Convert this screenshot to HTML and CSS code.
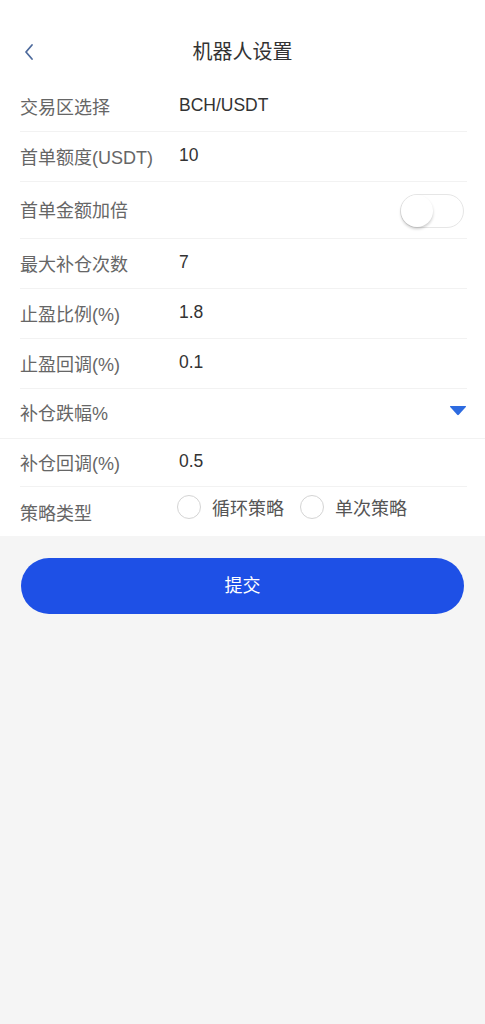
FILE: index.html
```html
<!DOCTYPE html>
<html>

<head>
    <meta charset="utf-8" />
    <title>机器人设置</title>
    <link rel="stylesheet" href="styles.css">
</head>

<body>
    <div class="page">
        <div class="header">
            <a class="back" href="javascript:;">
                <svg width="12" height="18" viewBox="0 0 12 18"><path d="M9 2 L3 9 L9 16" fill="none" stroke="#4d6a9c" stroke-width="1.8" stroke-linecap="round" stroke-linejoin="round"/></svg>
            </a>
            <h1 class="title">机器人设置</h1>
        </div>
        <ul class="form">
            <li class="row">
                <span class="label">交易区选择</span>
                <span class="value">BCH/USDT</span>
            </li>
            <li class="row">
                <span class="label">首单额度(USDT)</span>
                <span class="value">10</span>
            </li>
            <li class="row row-tall">
                <span class="label">首单金额加倍</span>
                <span class="switch"><i class="knob"></i></span>
            </li>
            <li class="row">
                <span class="label">最大补仓次数</span>
                <span class="value">7</span>
            </li>
            <li class="row">
                <span class="label">止盈比例(%)</span>
                <span class="value">1.8</span>
            </li>
            <li class="row">
                <span class="label">止盈回调(%)</span>
                <span class="value">0.1</span>
            </li>
            <li class="row row-full">
                <span class="label">补仓跌幅%</span>
                <svg class="arrow" width="18" height="11" viewBox="0 0 18 11"><path d="M1.5 1 L16.5 1 Q17.5 1 16.8 1.9 L9.8 9.8 Q9 10.6 8.2 9.8 L1.2 1.9 Q0.5 1 1.5 1 Z" fill="#2d6be0"/></svg>
            </li>
            <li class="row row-short">
                <span class="label">补仓回调(%)</span>
                <span class="value">0.5</span>
            </li>
            <li class="row row-last">
                <span class="label label-low">策略类型</span>
                <div class="radios">
                    <label class="radio"><i class="circle"></i>循环策略</label>
                    <label class="radio"><i class="circle"></i>单次策略</label>
                </div>
            </li>
        </ul>
        <div class="submit-wrap">
            <a class="submit" href="javascript:;">提交</a>
        </div>
    </div>
</body>

</html>
```

FILE: styles.css
```css
* {
    margin: 0;
    padding: 0;
}

body {
    background: #f5f5f5;
    font-family: "Liberation Sans", "Noto Sans CJK SC", sans-serif;
    font-size: 17.5px;
    color: #333;
}

.header {
    height: 82px;
    background: #fff;
    position: relative;
    display: flex;
    justify-content: center;
    align-items: flex-start;
}

.back {
    position: absolute;
    left: 23px;
    top: 43px;
}

.title {
    margin-top: 38px;
    font-size: 20px;
    font-weight: normal;
    color: #333;
    line-height: 28px;
}

.form {
    list-style: none;
    background: #fff;
}

.row {
    margin: 0 18px 0 20px;
    border-bottom: 1px solid #f2f2f2;
    display: flex;
    align-items: center;
    padding-bottom: 2px;
    box-sizing: border-box;
    height: 50px;
}

.row-tall {
    height: 57px;
}

.row-full {
    margin: 0;
    padding: 0 18px 3px 20px;
}

.row-short {
    height: 48px;
}

.row-last {
    border-bottom: none;
    height: 49px;
    padding-bottom: 4px;
}

.label {
    width: 159px;
    color: #666;
    font-size: 18px;
    flex-shrink: 0;
}

.label-low {
    margin-top: 4px;
}

.value {
    color: #333;
}

.switch {
    margin-left: auto;
    width: 64px;
    height: 34px;
    border: 1px solid #e6e6e6;
    border-radius: 17px;
    box-sizing: border-box;
    position: relative;
    margin-right: 3px;
    margin-top: 3px;
}

.knob {
    position: absolute;
    left: 0;
    top: 0;
    width: 32px;
    height: 32px;
    border-radius: 50%;
    background: #fff;
    box-shadow: 0 2px 3px rgba(0, 0, 0, 0.2);
}

.arrow {
    margin-left: auto;
    margin-top: -3px;
}

.radios {
    display: flex;
    align-items: center;
    margin-top: -6px;
    margin-left: -2px;
}

.radio {
    display: flex;
    align-items: center;
    color: #555;
    font-size: 18px;
    margin-right: 16px;
}

.circle {
    width: 24px;
    height: 24px;
    border: 1.5px solid #d4d4d4;
    border-radius: 50%;
    margin-right: 11px;
    box-sizing: border-box;
}

.submit-wrap {
    padding: 22px 21px 0;
}

.submit {
    display: block;
    height: 56px;
    line-height: 56px;
    border-radius: 28px;
    background: #1e50e6;
    color: #fff;
    text-align: center;
    font-size: 18px;
    text-decoration: none;
}
```
